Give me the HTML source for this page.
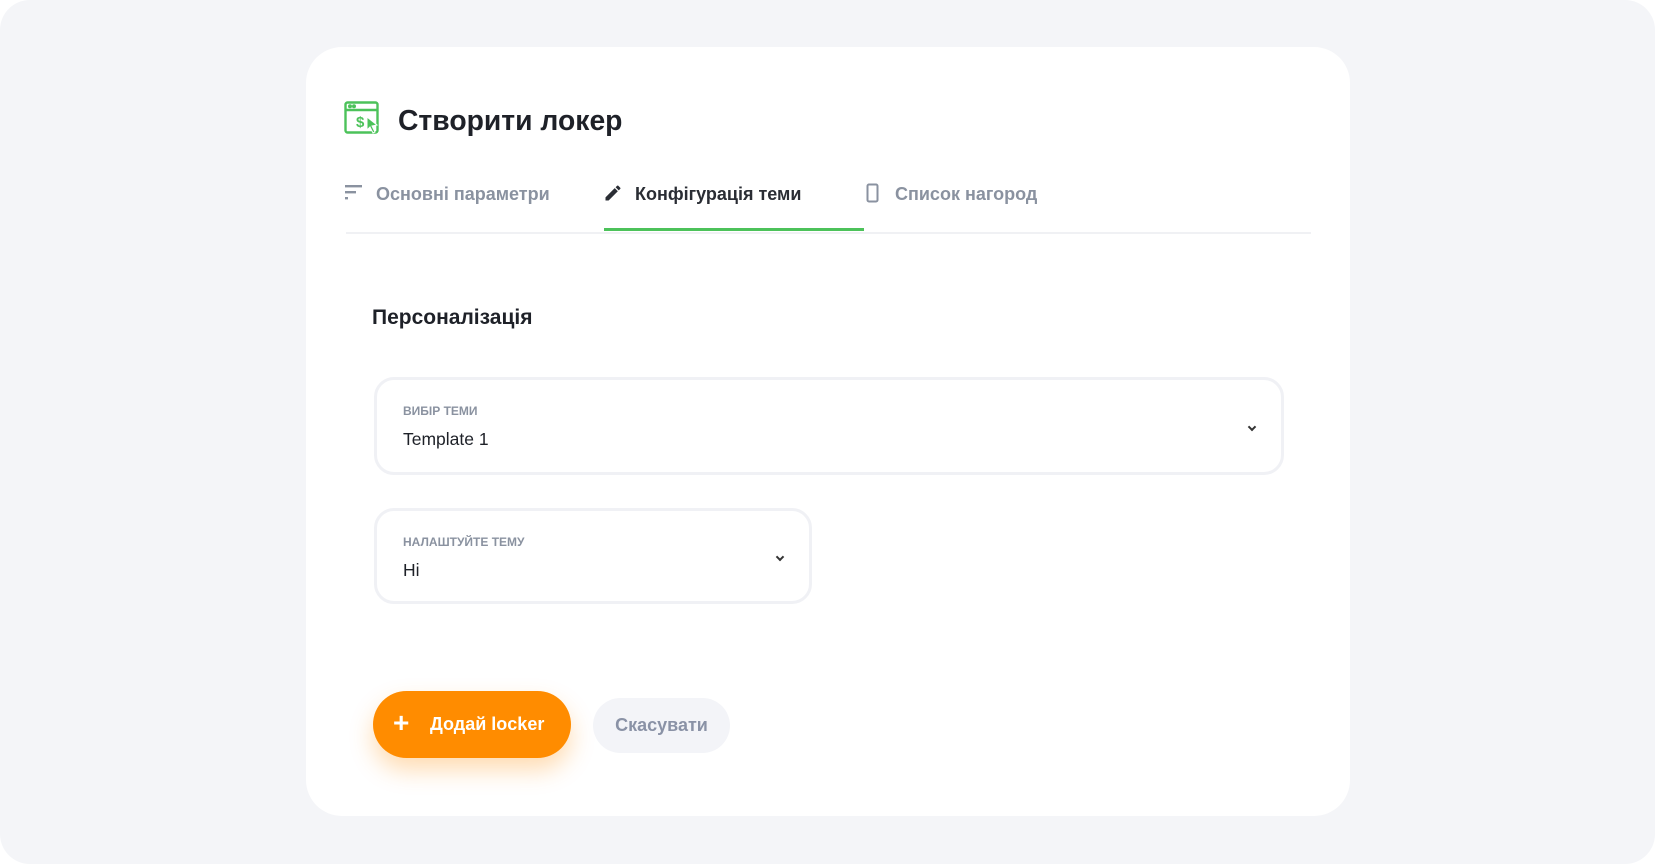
<!DOCTYPE html>
<html><head><meta charset="utf-8"><style>
*{box-sizing:border-box;margin:0;padding:0}
body{width:1655px;height:864px;background:#fff;font-family:"Liberation Sans",sans-serif;overflow:hidden;position:relative}
.bg{position:absolute;left:0;top:0;width:1655px;height:864px;background:#f4f5f8;border-radius:30px}
.card{position:absolute;left:306px;top:47px;width:1044px;height:769px;background:#fff;border-radius:36px}
.abs{position:absolute}
.title{left:398px;top:104px;font-size:28.3px;font-weight:bold;color:#1e2128}
.tab{top:184px;font-size:18px;font-weight:bold;color:#8a92a0;white-space:nowrap}
.sel{position:absolute;border:3px solid #f0f1f5;border-radius:20px;background:#fff}
.lbl{position:absolute;left:26px;font-size:12px;font-weight:bold;color:#8a92a0;text-transform:uppercase}
.val{position:absolute;left:26px;top:49px;font-size:17.5px;color:#1e2128}
.chev{position:absolute;width:6px;height:6px;border-right:2px solid #333;border-bottom:2px solid #333;transform:rotate(45deg)}
</style></head><body>
<div class="bg"></div>
<div class="card"></div>
<svg class="abs" style="left:344px;top:101px" width="36" height="35" viewBox="0 0 36 35" fill="none" stroke="#4cc25a" stroke-width="2.4">
<rect x="1.5" y="1.5" width="32" height="30" rx="2"/><line x1="1.5" y1="9" x2="33.5" y2="9"/>
<circle cx="6" cy="5.3" r="0.8" fill="#4cc25a"/><circle cx="10" cy="5.3" r="0.8" fill="#4cc25a"/>
<text x="12" y="26" font-size="15" font-weight="bold" fill="#4cc25a" stroke="none" font-family="Liberation Sans">$</text>
<path d="M23 16 L33 24 L28 25 L31 31 L29 32 L26 26 L23 29 Z" fill="#4cc25a" stroke="#fff" stroke-width="1"/>
</svg>
<div class="abs title">Створити локер</div>
<svg class="abs" style="left:345px;top:184px" width="18" height="18"><rect x="0" y="1" width="17" height="2.4" fill="#8a92a0"/><rect x="0" y="7" width="11" height="2.4" fill="#8a92a0"/><rect x="0" y="13" width="3" height="2.4" fill="#8a92a0"/></svg>
<div class="abs tab" style="left:376px">Основні параметри</div>
<svg class="abs" style="left:603px;top:183px" width="20" height="20" viewBox="0 0 24 24"><path d="M3 17.25V21h3.75L17.8 9.94l-3.75-3.75L3 17.25zM20.7 7.04a1 1 0 000-1.41l-2.34-2.34a1 1 0 00-1.41 0l-1.83 1.83 3.75 3.75 1.83-1.83z" fill="#2a2d34"/></svg>
<div class="abs tab" style="left:635px;color:#2a2d34">Конфігурація теми</div>
<svg class="abs" style="left:866px;top:183px" width="14" height="20"><rect x="1.5" y="1.5" width="10" height="17" rx="1.5" fill="none" stroke="#8a92a0" stroke-width="2"/></svg>
<div class="abs tab" style="left:895px">Список нагород</div>
<div class="abs" style="left:346px;top:232px;width:965px;height:2px;background:#f0f1f4"></div>
<div class="abs" style="left:604px;top:228px;width:260px;height:3px;background:#4cc25a"></div>
<div class="abs" style="left:372px;top:306px;font-size:21px;font-weight:bold;color:#1e2128">Персоналізація</div>
<div class="sel" style="left:374px;top:377px;width:910px;height:98px">
<div class="lbl" style="top:24px">Вибір теми</div><div class="val">Template 1</div>
<div class="chev" style="left:872px;top:44px"></div></div>
<div class="sel" style="left:374px;top:508px;width:438px;height:96px">
<div class="lbl" style="top:24px">Налаштуйте тему</div><div class="val">Hi</div>
<div class="chev" style="left:400px;top:43px"></div></div>
<div class="abs" style="left:373px;top:691px;width:198px;height:67px;background:#ff8c00;border-radius:34px;box-shadow:0 12px 24px rgba(255,140,0,0.3)">
<div class="abs" style="left:20px;top:16px;font-size:28px;font-weight:bold;color:#fff">+</div>
<div class="abs" style="left:57px;top:23px;font-size:18px;font-weight:bold;color:#fff">Додай locker</div></div>
<div class="abs" style="left:593px;top:698px;width:137px;height:55px;background:#f3f4f8;border-radius:28px;text-align:center;line-height:55px;font-size:18px;font-weight:bold;color:#8a92a6">Скасувати</div>
</body></html>
